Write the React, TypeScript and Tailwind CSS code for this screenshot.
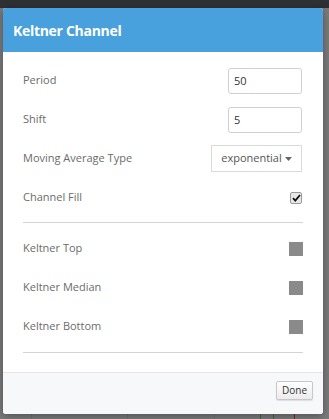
import React from 'react';

const font = { fontFamily: '"Open Sans", "Noto Sans", sans-serif' };

const Row = ({ label, children }: { label: string; children?: React.ReactNode }) => (
    <div className="flex h-[39px] items-center justify-between">
        <span className="text-[11px] text-[#6b6b6b]">{label}</span>
        {children}
    </div>
);

const Swatch = () => <div className="h-[14px] w-[14px] bg-[#8a8a8a]" />;

const App = () => {
    return (
        <div className="relative h-[419px] w-[329px] overflow-hidden bg-[#7b7b7b]" style={font}>
            {/* chart underneath the overlay */}
            <div className="absolute left-0 top-0 h-[8px] w-full bg-[#2e3033]" />
            <div className="absolute left-[31px] top-[8px] h-[411px] w-px bg-[#727272]" />
            <div className="absolute left-[127px] top-[8px] h-[411px] w-px bg-[#727272]" />
            <div className="absolute left-[214px] top-[8px] h-[411px] w-px bg-[#727272]" />
            <div className="absolute left-[260px] top-[400px] h-[19px] w-px bg-[#3f6b3f]" />
            <div className="absolute left-[273px] top-[404px] h-[15px] w-px bg-[#3f6b3f]" />
            <div className="absolute left-[294px] top-[398px] h-[21px] w-px bg-[#7a2a22]" />

            <div className="absolute left-[3px] top-[8px] w-[320px] overflow-hidden rounded-[3px] bg-white shadow-[0_2px_8px_rgba(0,0,0,0.35)]">
                <div className="flex h-[44px] items-center bg-[#48a0dd] px-[10px]">
                    <h3 className="text-[14px] font-bold tracking-[-0.3px] text-white">Keltner Channel</h3>
                </div>
                <div className="px-[20px] pb-[19px] pt-[9px]">
                    <Row label="Period">
                        <input
                            readOnly
                            value="50"
                            className="mr-[1px] h-[26px] w-[74px] rounded-[3px] border border-[#d0d0d0] px-[5px] text-[11px] text-[#333] outline-none"
                        />
                    </Row>
                    <Row label="Shift">
                        <input
                            readOnly
                            value="5"
                            className="mr-[1px] h-[26px] w-[74px] rounded-[3px] border border-[#d0d0d0] px-[5px] text-[11px] text-[#333] outline-none"
                        />
                    </Row>
                    <Row label="Moving Average Type">
                        <div className="mr-[1px] flex h-[27px] w-[91px] items-center justify-center gap-[3px] border border-[#dadada] text-[11px] text-[#555]">
                            exponential
                            <svg width="7" height="4" viewBox="0 0 7 4">
                                <path d="M0 0h7L3.5 4z" fill="#666" />
                            </svg>
                        </div>
                    </Row>
                    <Row label="Channel Fill">
                        <div className="mr-[1px] flex h-[12px] w-[12px] items-center justify-center rounded-[2px] border border-[#9a9a9a] bg-[#e8e8e8]">
                            <svg width="9" height="8" viewBox="0 0 9 8">
                                <path d="M1 4.2l2.3 2.4L8 1" fill="none" stroke="#111" strokeWidth="1.8" />
                            </svg>
                        </div>
                    </Row>
                    <div className="mt-[5px] h-px bg-[#d4d4d4]" />
                    <div className="mt-[6px]">
                        <Row label="Keltner Top">
                            <Swatch />
                        </Row>
                        <Row label="Keltner Median">
                            <Swatch />
                        </Row>
                        <Row label="Keltner Bottom">
                            <Swatch />
                        </Row>
                    </div>
                    <div className="mt-[6px] h-px bg-[#d4d4d4]" />
                </div>
                <div className="flex h-[42px] justify-end border-t border-[#e4e6ea] bg-[#f7f8fa] pr-[10px] pt-[8px]">
                    <button className="h-[19px] w-[37px] rounded-[2px] border border-[#c8c8c8] bg-gradient-to-b from-white to-[#ececec] text-[10px] text-[#333] shadow-[0_1px_1px_rgba(0,0,0,0.1)]">
                        Done
                    </button>
                </div>
            </div>
        </div>
    );
};

export default App;
